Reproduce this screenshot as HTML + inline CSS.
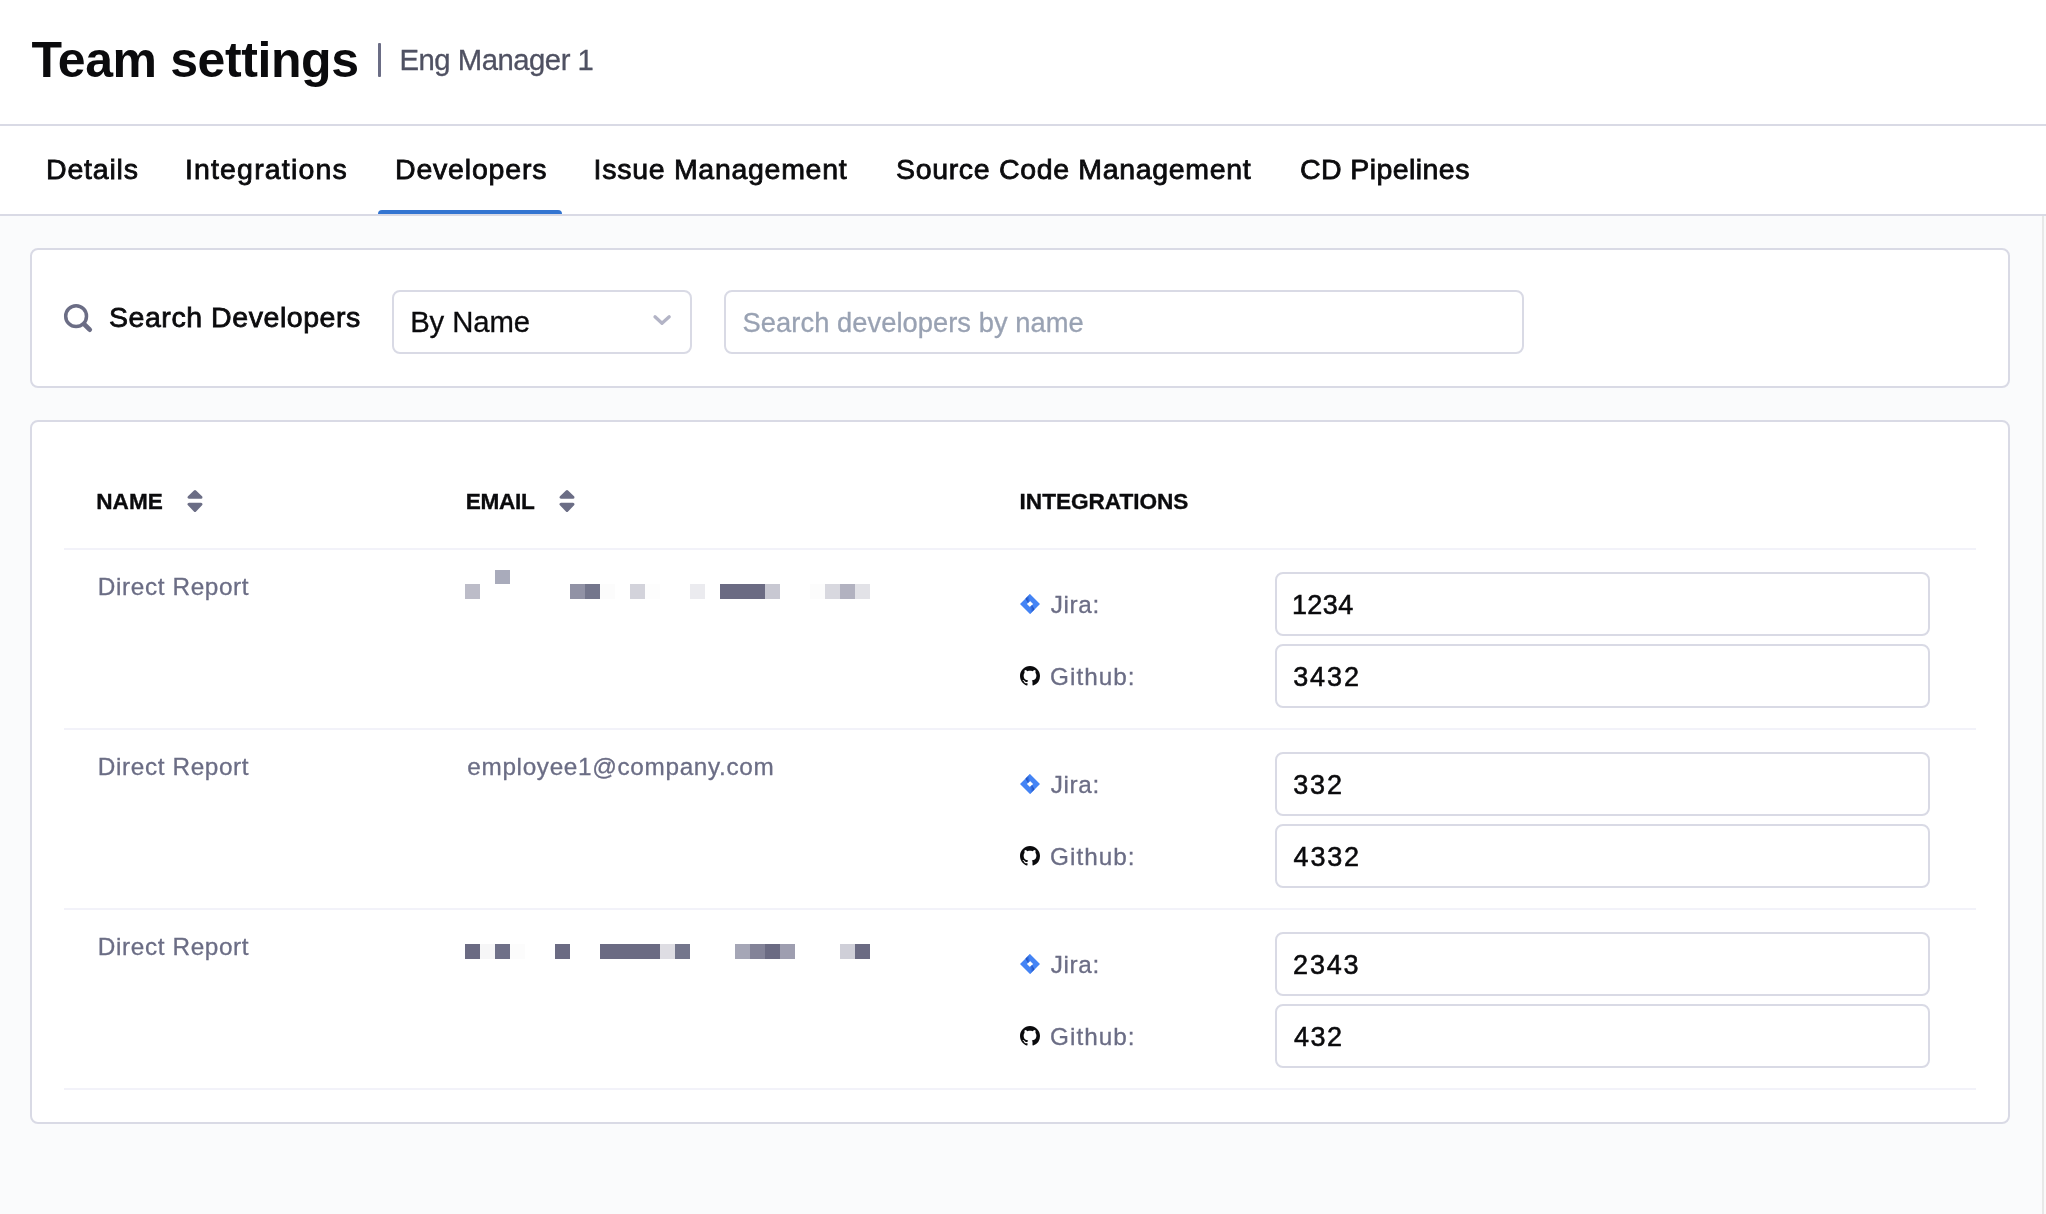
<!DOCTYPE html>
<html lang="en">
<head>
<meta charset="utf-8">
<title>Team settings</title>
<style>
*{box-sizing:border-box;margin:0;padding:0}
html,body{width:2046px;height:1214px}
body{background:#fafbfc;font-family:"Liberation Sans",sans-serif;position:relative;color:#0b0b0d;will-change:transform}
.t{position:absolute;white-space:nowrap;line-height:1;font-weight:400;font-style:normal}
header{position:absolute;left:0;top:0;width:2046px;height:126px;background:#fff;border-bottom:2px solid #d9dae5}
h1{font-size:0;line-height:0}
.divider{position:absolute;left:378px;top:43px;width:2.6px;height:34px;background:#6b6d85;border-radius:1px}
nav{position:absolute;left:0;top:126px;width:2046px;height:90px;background:#fff;border-bottom:2px solid #d9dae5}
nav .t{color:#0b0b0d}
.active-bar{position:absolute;left:378px;top:84px;width:184px;height:4px;background:#3375d1;border-radius:4px 4px 0 0}
.scroll-edge{position:absolute;left:2042px;top:216px;width:4px;height:998px;background:#fafafa;border-left:2px solid #e8e8e8}
.card{position:absolute;left:30px;width:1980px;background:#fff;border:2px solid #d9dae5;border-radius:8px}
.field{position:absolute;background:#fff;border:2px solid #d9dae5;border-radius:8px;height:64px}
.rowline{position:absolute;left:32px;width:1912px;height:2px;background:#f2f2f9}
.row{position:absolute;left:0;width:1976px;height:180px}
.px{position:absolute;width:15px;height:15px}
svg{position:absolute;overflow:visible}
</style>
</head>
<body>
<svg width="0" height="0" style="left:0;top:0"><defs><linearGradient id="jg1" x1="0.1" y1="0.6" x2="0.9" y2="0.3"><stop offset="0.1" stop-color="#1b4fc2"/><stop offset="1" stop-color="#4484f5"/></linearGradient><linearGradient id="jg2" x1="0.9" y1="0.4" x2="0.1" y2="0.7"><stop offset="0.1" stop-color="#1b4fc2"/><stop offset="1" stop-color="#4484f5"/></linearGradient></defs></svg>
<header>
<h1><span class="t" style="left:31.38px;top:35.3px;font-size:50px;color:#0b0b0d;font-weight:700;letter-spacing:-0.4px;">Team settings</span></h1>
<span class="divider"></span>
<span class="t" style="left:399.53px;top:44.53px;font-size:29.3px;color:#4f5162;letter-spacing:-0.5px;-webkit-text-stroke:0.3px #4f5162;">Eng Manager 1</span>
</header>
<nav>
<a class="t tab" style="left:46px;top:28.62px;font-size:28.5px;color:#0b0b0d;letter-spacing:0.8px;-webkit-text-stroke:0.8px #0b0b0d;">Details</a>
<a class="t tab" style="left:184.91px;top:28.62px;font-size:28.5px;color:#0b0b0d;letter-spacing:1.17px;-webkit-text-stroke:0.8px #0b0b0d;">Integrations</a>
<a class="t tab active" style="left:395px;top:28.62px;font-size:28.5px;color:#0b0b0d;letter-spacing:0.81px;-webkit-text-stroke:0.8px #0b0b0d;">Developers</a>
<a class="t tab" style="left:593.61px;top:28.62px;font-size:28.5px;color:#0b0b0d;letter-spacing:0.71px;-webkit-text-stroke:0.8px #0b0b0d;">Issue Management</a>
<a class="t tab" style="left:895.98px;top:28.62px;font-size:28.5px;color:#0b0b0d;letter-spacing:0.67px;-webkit-text-stroke:0.8px #0b0b0d;">Source Code Management</a>
<a class="t tab" style="left:1299.93px;top:28.62px;font-size:28.5px;color:#0b0b0d;letter-spacing:0.43px;-webkit-text-stroke:0.8px #0b0b0d;">CD Pipelines</a>
<span class="active-bar"></span>
</nav>
<div class="scroll-edge"></div>
<section class="card search-card" style="top:248px;height:140px">
<svg class="ico-search" style="left:28px;top:50px" width="36" height="36" viewBox="60 300 36 36"><circle cx="76.1" cy="316.2" r="10.4" fill="none" stroke="#6b6d85" stroke-width="3.5"/><line x1="84.6" y1="324.6" x2="89.7" y2="329.6" stroke="#6b6d85" stroke-width="4.8" stroke-linecap="round"/></svg>
<label class="t" style="left:76.98px;top:52.62px;font-size:28.5px;color:#0b0b0d;letter-spacing:0.56px;-webkit-text-stroke:0.8px #0b0b0d;">Search Developers</label>
<div class="field select" style="left:360px;top:40px;width:300px"><span class="t" style="left:16.13px;top:15.03px;font-size:29.3px;color:#0b0b0d;letter-spacing:-0.09px;-webkit-text-stroke:0.3px #0b0b0d;">By Name</span><svg class="chevron" style="left:256px;top:18px" width="24" height="20" viewBox="650 310 24 20"><polyline points="655,316.8 662,323.3 669.2,316.8" fill="none" stroke="#b3b4c6" stroke-width="3.3" stroke-linecap="round" stroke-linejoin="round"/></svg></div>
<div class="field input" style="left:692px;top:40px;width:800px"><span class="t" style="left:16.59px;top:16.83px;font-size:27.3px;color:#99a2b3;letter-spacing:0.05px;-webkit-text-stroke:0.3px #99a2b3;">Search developers by name</span></div>
</section>
<section class="card table-card" style="top:420px;height:704px">
<div class="thead"><span class="t" style="left:64.28px;top:68.73px;font-size:22.6px;color:#0b0b0d;font-weight:700;letter-spacing:0.01px;-webkit-text-stroke:0.35px #0b0b0d;">NAME</span><svg class="sort" style="left:155px;top:67px" width="16" height="24" viewBox="0 0 16 24"><g fill="#6b6d85" stroke="#6b6d85" stroke-width="3" stroke-linejoin="round"><polygon points="8,2.6 2,8.3 14,8.3"/><polygon points="8,21.4 2,15.3 14,15.3"/></g></svg><span class="t" style="left:433.78px;top:68.93px;font-size:22.6px;color:#0b0b0d;font-weight:700;letter-spacing:-0.31px;-webkit-text-stroke:0.35px #0b0b0d;">EMAIL</span><svg class="sort" style="left:527px;top:67px" width="16" height="24" viewBox="0 0 16 24"><g fill="#6b6d85" stroke="#6b6d85" stroke-width="3" stroke-linejoin="round"><polygon points="8,2.6 2,8.3 14,8.3"/><polygon points="8,21.4 2,15.3 14,15.3"/></g></svg><span class="t" style="left:987.58px;top:68.93px;font-size:22.6px;color:#0b0b0d;font-weight:700;letter-spacing:-0.02px;-webkit-text-stroke:0.35px #0b0b0d;">INTEGRATIONS</span></div>
<div class="rowline" style="top:126px"></div>
<div class="row" style="top:128px">
<span class="t" style="left:65.79px;top:24.73px;font-size:24.3px;color:#6b6d85;letter-spacing:0.64px;-webkit-text-stroke:0.3px #6b6d85;">Direct Report</span>
<div class="redacted"><i class="px" style="left:433px;top:34px;background:#bcbcc8;"></i><i class="px" style="left:463px;top:20px;background:#a9abbb;height:14px;"></i><i class="px" style="left:538px;top:34px;background:#9192a5;"></i><i class="px" style="left:553px;top:34px;background:#74768c;"></i><i class="px" style="left:568px;top:34px;background:#fcfcfc;"></i><i class="px" style="left:598px;top:34px;background:#d3d3db;"></i><i class="px" style="left:613px;top:34px;background:#fdfdfd;"></i><i class="px" style="left:658px;top:34px;background:#ebebef;"></i><i class="px" style="left:688px;top:34px;background:#6b6b83;width:45px;"></i><i class="px" style="left:733px;top:34px;background:#c8c8d2;"></i><i class="px" style="left:778px;top:34px;background:#fcfcfc;"></i><i class="px" style="left:793px;top:34px;background:#d8d8df;"></i><i class="px" style="left:808px;top:34px;background:#b2b2c0;"></i><i class="px" style="left:823px;top:34px;background:#e2e2e7;"></i></div>
<svg class="ico-jira" style="left:988px;top:44px" width="20" height="20" viewBox="0 0 24 24"><path fill="#4484f5" fill-rule="evenodd" d="M12 0 L24 12 L12 24 L0 12 Z M12 8.3 L8.3 12 L12 15.7 L15.7 12 Z"/><path fill="url(#jg1)" d="M12 0 L12 8.3 L9.6 10.7 L6.6 5.4 Z"/><path fill="url(#jg2)" d="M12 24 L12 15.7 L14.4 13.3 L17.4 18.6 Z"/></svg><span class="t" style="left:1018.84px;top:43.23px;font-size:24.3px;color:#6b6d85;letter-spacing:0.61px;-webkit-text-stroke:0.3px #6b6d85;">Jira:</span>
<div class="field input" style="left:1243px;top:22px;width:655px"><span class="t" style="left:14.91px;top:17.63px;font-size:27px;color:#0b0b0d;letter-spacing:0.44px;-webkit-text-stroke:0.55px #0b0b0d;">1234</span></div>
<svg class="ico-github" style="left:988px;top:116px" width="20" height="20" viewBox="0 0 16 16"><path fill="#0b0b0d" d="M8 0C3.58 0 0 3.58 0 8c0 3.54 2.29 6.53 5.47 7.59.4.07.55-.17.55-.38 0-.19-.01-.82-.01-1.49-2.01.37-2.53-.49-2.69-.94-.09-.23-.48-.94-.82-1.13-.28-.15-.68-.52-.01-.53.63-.01 1.08.58 1.23.82.72 1.21 1.87.87 2.33.66.07-.52.28-.87.51-1.07-1.78-.2-3.64-.89-3.64-3.95 0-.87.31-1.59.82-2.15-.08-.2-.36-1.02.08-2.12 0 0 .67-.21 2.2.82.64-.18 1.32-.27 2-.27.68 0 1.36.09 2 .27 1.53-1.04 2.2-.82 2.2-.82.44 1.1.16 1.92.08 2.12.51.56.82 1.27.82 2.15 0 3.07-1.87 3.75-3.65 3.95.29.25.54.73.54 1.48 0 1.07-.01 1.93-.01 2.2 0 .21.15.46.55.38A8.013 8.013 0 0016 8c0-4.42-3.58-8-8-8z"/></svg><span class="t" style="left:1018.08px;top:115.18px;font-size:24.3px;color:#6b6d85;letter-spacing:1.03px;-webkit-text-stroke:0.3px #6b6d85;">Github:</span>
<div class="field input" style="left:1243px;top:94px;width:655px"><span class="t" style="left:16.18px;top:17.93px;font-size:27px;color:#0b0b0d;letter-spacing:1.9px;-webkit-text-stroke:0.55px #0b0b0d;">3432</span></div>
</div>
<div class="rowline" style="top:306px"></div>
<div class="row" style="top:308px">
<span class="t" style="left:65.79px;top:24.73px;font-size:24.3px;color:#6b6d85;letter-spacing:0.64px;-webkit-text-stroke:0.3px #6b6d85;">Direct Report</span>
<span class="t" style="left:435.32px;top:24.83px;font-size:24.3px;color:#6b6d85;letter-spacing:0.67px;-webkit-text-stroke:0.3px #6b6d85;">employee1@company.com</span>
<svg class="ico-jira" style="left:988px;top:44px" width="20" height="20" viewBox="0 0 24 24"><path fill="#4484f5" fill-rule="evenodd" d="M12 0 L24 12 L12 24 L0 12 Z M12 8.3 L8.3 12 L12 15.7 L15.7 12 Z"/><path fill="url(#jg1)" d="M12 0 L12 8.3 L9.6 10.7 L6.6 5.4 Z"/><path fill="url(#jg2)" d="M12 24 L12 15.7 L14.4 13.3 L17.4 18.6 Z"/></svg><span class="t" style="left:1018.84px;top:43.23px;font-size:24.3px;color:#6b6d85;letter-spacing:0.61px;-webkit-text-stroke:0.3px #6b6d85;">Jira:</span>
<div class="field input" style="left:1243px;top:22px;width:655px"><span class="t" style="left:16.18px;top:17.63px;font-size:27px;color:#0b0b0d;letter-spacing:1.85px;-webkit-text-stroke:0.55px #0b0b0d;">332</span></div>
<svg class="ico-github" style="left:988px;top:116px" width="20" height="20" viewBox="0 0 16 16"><path fill="#0b0b0d" d="M8 0C3.58 0 0 3.58 0 8c0 3.54 2.29 6.53 5.47 7.59.4.07.55-.17.55-.38 0-.19-.01-.82-.01-1.49-2.01.37-2.53-.49-2.69-.94-.09-.23-.48-.94-.82-1.13-.28-.15-.68-.52-.01-.53.63-.01 1.08.58 1.23.82.72 1.21 1.87.87 2.33.66.07-.52.28-.87.51-1.07-1.78-.2-3.64-.89-3.64-3.95 0-.87.31-1.59.82-2.15-.08-.2-.36-1.02.08-2.12 0 0 .67-.21 2.2.82.64-.18 1.32-.27 2-.27.68 0 1.36.09 2 .27 1.53-1.04 2.2-.82 2.2-.82.44 1.1.16 1.92.08 2.12.51.56.82 1.27.82 2.15 0 3.07-1.87 3.75-3.65 3.95.29.25.54.73.54 1.48 0 1.07-.01 1.93-.01 2.2 0 .21.15.46.55.38A8.013 8.013 0 0016 8c0-4.42-3.58-8-8-8z"/></svg><span class="t" style="left:1018.08px;top:115.18px;font-size:24.3px;color:#6b6d85;letter-spacing:1.03px;-webkit-text-stroke:0.3px #6b6d85;">Github:</span>
<div class="field input" style="left:1243px;top:94px;width:655px"><span class="t" style="left:16.61px;top:17.93px;font-size:27px;color:#0b0b0d;letter-spacing:1.76px;-webkit-text-stroke:0.55px #0b0b0d;">4332</span></div>
</div>
<div class="rowline" style="top:486px"></div>
<div class="row" style="top:488px">
<span class="t" style="left:65.79px;top:24.73px;font-size:24.3px;color:#6b6d85;letter-spacing:0.64px;-webkit-text-stroke:0.3px #6b6d85;">Direct Report</span>
<div class="redacted"><i class="px" style="left:433px;top:34px;background:#6b6b83;"></i><i class="px" style="left:448px;top:34px;background:#f6f6f7;"></i><i class="px" style="left:463px;top:34px;background:#6f7088;"></i><i class="px" style="left:478px;top:34px;background:#fcfcfc;"></i><i class="px" style="left:523px;top:34px;background:#6b6b83;"></i><i class="px" style="left:568px;top:34px;background:#6b6b83;width:60px;"></i><i class="px" style="left:628px;top:34px;background:#dedde3;"></i><i class="px" style="left:643px;top:34px;background:#74768c;"></i><i class="px" style="left:703px;top:34px;background:#a5a6b6;"></i><i class="px" style="left:718px;top:34px;background:#838398;"></i><i class="px" style="left:733px;top:34px;background:#6b6b83;"></i><i class="px" style="left:748px;top:34px;background:#9e9eb0;"></i><i class="px" style="left:808px;top:34px;background:#cfcfd8;"></i><i class="px" style="left:823px;top:34px;background:#6b6b83;"></i></div>
<svg class="ico-jira" style="left:988px;top:44px" width="20" height="20" viewBox="0 0 24 24"><path fill="#4484f5" fill-rule="evenodd" d="M12 0 L24 12 L12 24 L0 12 Z M12 8.3 L8.3 12 L12 15.7 L15.7 12 Z"/><path fill="url(#jg1)" d="M12 0 L12 8.3 L9.6 10.7 L6.6 5.4 Z"/><path fill="url(#jg2)" d="M12 24 L12 15.7 L14.4 13.3 L17.4 18.6 Z"/></svg><span class="t" style="left:1018.84px;top:43.23px;font-size:24.3px;color:#6b6d85;letter-spacing:0.61px;-webkit-text-stroke:0.3px #6b6d85;">Jira:</span>
<div class="field input" style="left:1243px;top:22px;width:655px"><span class="t" style="left:16.12px;top:17.93px;font-size:27px;color:#0b0b0d;letter-spacing:1.81px;-webkit-text-stroke:0.55px #0b0b0d;">2343</span></div>
<svg class="ico-github" style="left:988px;top:116px" width="20" height="20" viewBox="0 0 16 16"><path fill="#0b0b0d" d="M8 0C3.58 0 0 3.58 0 8c0 3.54 2.29 6.53 5.47 7.59.4.07.55-.17.55-.38 0-.19-.01-.82-.01-1.49-2.01.37-2.53-.49-2.69-.94-.09-.23-.48-.94-.82-1.13-.28-.15-.68-.52-.01-.53.63-.01 1.08.58 1.23.82.72 1.21 1.87.87 2.33.66.07-.52.28-.87.51-1.07-1.78-.2-3.64-.89-3.64-3.95 0-.87.31-1.59.82-2.15-.08-.2-.36-1.02.08-2.12 0 0 .67-.21 2.2.82.64-.18 1.32-.27 2-.27.68 0 1.36.09 2 .27 1.53-1.04 2.2-.82 2.2-.82.44 1.1.16 1.92.08 2.12.51.56.82 1.27.82 2.15 0 3.07-1.87 3.75-3.65 3.95.29.25.54.73.54 1.48 0 1.07-.01 1.93-.01 2.2 0 .21.15.46.55.38A8.013 8.013 0 0016 8c0-4.42-3.58-8-8-8z"/></svg><span class="t" style="left:1018.08px;top:115.18px;font-size:24.3px;color:#6b6d85;letter-spacing:1.03px;-webkit-text-stroke:0.3px #6b6d85;">Github:</span>
<div class="field input" style="left:1243px;top:94px;width:655px"><span class="t" style="left:17.01px;top:17.73px;font-size:27px;color:#0b0b0d;letter-spacing:1.43px;-webkit-text-stroke:0.55px #0b0b0d;">432</span></div>
</div>
<div class="rowline" style="top:666px"></div>
</section>
</body>
</html>
